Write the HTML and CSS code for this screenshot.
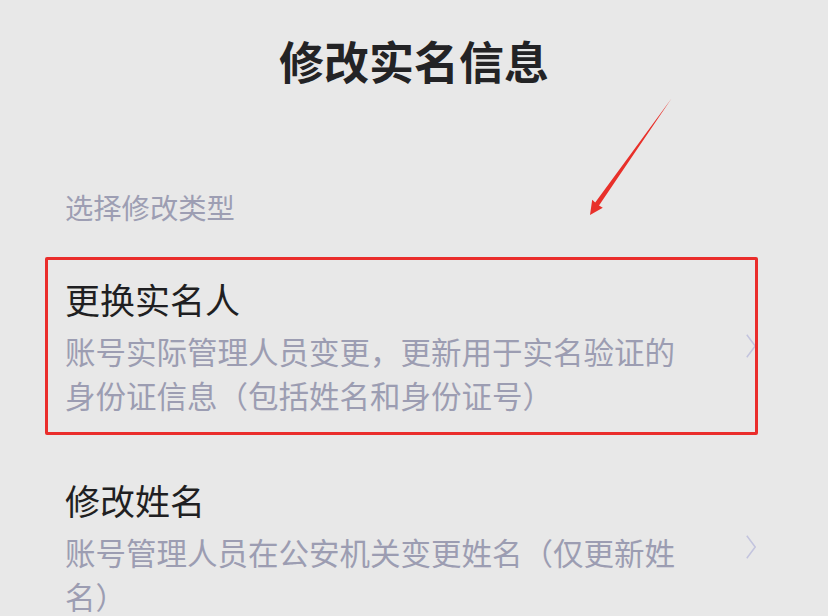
FILE: index.html
```html
<!DOCTYPE html>
<html lang="zh-CN">
<head>
<meta charset="utf-8">
<title>修改实名信息</title>
<link rel="stylesheet" href="styles.css">
</head>
<body>
<div class="page">
  <h1 class="title">修改实名信息</h1>
  <div class="section-label">选择修改类型</div>
  <ul class="options">
    <li class="option option-marked">
      <div class="option-text">
        <div class="option-name">更换实名人</div>
        <div class="option-desc">账号实际管理人员变更，更新用于实名验证的身份证信息（包括姓名和身份证号）</div>
      </div>
      <svg class="chevron" width="10" height="24" viewBox="0 0 10 24"><polyline points="0.8,0.8 9.2,12 0.8,23.2" fill="none" stroke="#c3c4de" stroke-width="1.5"/></svg>
    </li>
    <li class="option">
      <div class="option-text">
        <div class="option-name">修改姓名</div>
        <div class="option-desc">账号管理人员在公安机关变更姓名（仅更新姓名）</div>
      </div>
      <svg class="chevron" width="10" height="24" viewBox="0 0 10 24"><polyline points="0.8,0.8 9.2,12 0.8,23.2" fill="none" stroke="#c3c4de" stroke-width="1.5"/></svg>
    </li>
  </ul>
  <svg class="annotation-arrow" width="828" height="616" viewBox="0 0 828 616">
    <polygon points="671.5,98.5 599,205.5 602.8,207.8 590,215 592.2,199.8 595.2,202.6" fill="#e8302a"/>
  </svg>
</div>
</body>
</html>
```
FILE: styles.css
```css
html, body {
  margin: 0;
  padding: 0;
  height: 616px;
  overflow: hidden;
  background: #e8e8e8;
}
body {
  font-family: "Noto Sans CJK SC", "Noto Sans", sans-serif;
}
.page {
  position: relative;
  height: 616px;
}
.title {
  margin: 0;
  padding-top: 31px;
  font-size: 45px;
  line-height: 60px;
  font-weight: 700;
  color: #232325;
  text-align: center;
}
.section-label {
  margin-top: 96px;
  padding-left: 65px;
  font-size: 28.3px;
  line-height: 40px;
  color: #9d9eb3;
}
.options {
  list-style: none;
  margin: 30px 0 0;
  padding: 0;
  display: flex;
  flex-direction: column;
  gap: 23px;
}
.option {
  position: relative;
  display: flex;
  align-items: center;
  justify-content: space-between;
  padding: 18px 72px 18px 65px;
}
.option-marked::after {
  content: "";
  position: absolute;
  top: 0;
  bottom: 0;
  left: 45px;
  right: 70px;
  border: 3px solid #ea2d2b;
  border-radius: 2px;
  pointer-events: none;
}
.option-text {
  width: 622px;
}
.option-name {
  font-size: 35px;
  line-height: 48px;
  color: #1f1f22;
}
.option-desc {
  margin-top: 7px;
  font-size: 30.5px;
  line-height: 43.5px;
  color: #9c9db2;
}
.chevron {
  display: block;
  flex: none;
}
.annotation-arrow {
  position: absolute;
  top: 0;
  left: 0;
  pointer-events: none;
}
```
